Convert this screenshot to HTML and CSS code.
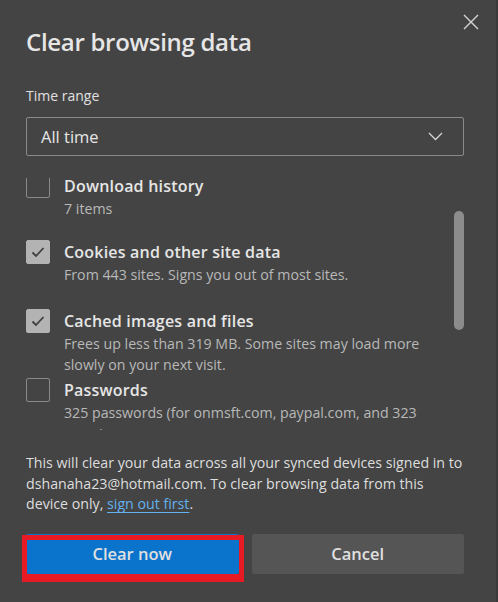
FILE: index.html
```html
<!DOCTYPE html>
<html>
<head>
<meta charset="utf-8">
<link rel="stylesheet" href="styles.css">
</head>
<body>
<div class="dialog">
  <button class="close" aria-label="Close">
    <svg width="16" height="16" viewBox="0 0 16 16"><path d="M1 1 L15 15 M15 1 L1 15" stroke="#d6d6d6" stroke-width="1.4" fill="none"/></svg>
  </button>
  <h1 class="title">Clear browsing data</h1>
  <div class="label">Time range</div>
  <div class="select">
    <span>All time</span>
    <svg width="15" height="9" viewBox="0 0 15 9"><path d="M1 1 L7.5 7.5 L14 1" stroke="#d6d6d6" stroke-width="1.3" fill="none"/></svg>
  </div>
  <div class="list-wrap">
    <div class="list">
      <div class="item">
        <span class="box"></span>
        <div class="text">
          <div class="name">Download history</div>
          <div class="desc">7 items</div>
        </div>
      </div>
      <div class="item">
        <span class="box checked"><svg width="16" height="16" viewBox="0 0 16 16"><path d="M2.5 8.5 L6 12 L13.5 4" stroke="#3f3f3f" stroke-width="1.8" fill="none"/></svg></span>
        <div class="text">
          <div class="name">Cookies and other site data</div>
          <div class="desc">From 443 sites. Signs you out of most sites.</div>
        </div>
      </div>
      <div class="item">
        <span class="box checked"><svg width="16" height="16" viewBox="0 0 16 16"><path d="M2.5 8.5 L6 12 L13.5 4" stroke="#3f3f3f" stroke-width="1.8" fill="none"/></svg></span>
        <div class="text">
          <div class="name">Cached images and files</div>
          <div class="desc">Frees up less than 319 MB. Some sites may load more slowly on your next visit.</div>
        </div>
      </div>
      <div class="item">
        <span class="box"></span>
        <div class="text">
          <div class="name">Passwords</div>
          <div class="desc">325 passwords (for onmsft.com, paypal.com, and 323 more)</div>
        </div>
      </div>
    </div>
    <div class="scrollbar"></div>
  </div>
  <p class="note">This will clear your data across all your synced devices signed in to dshanaha23@hotmail.com. To clear browsing data from this device only, <a href="#">sign out first</a>.</p>
  <div class="buttons">
    <button class="btn primary">Clear now</button>
    <button class="btn secondary">Cancel</button>
  </div>
</div>
</body>
</html>
```

FILE: styles.css
```css
html, body {
  margin: 0;
  padding: 0;
  background: #3a3a3a;
  height: 602px;
  overflow: hidden;
}
.dialog {
  position: relative;
  width: 496px;
  height: 602px;
  box-sizing: border-box;
  background: #444444;
  padding: 0 32px 0 26px;
  font-family: "Open Sans", "Noto Sans", sans-serif;
  color: #e2e2e2;
}
.close {
  position: absolute;
  top: 14px;
  left: 463px;
  width: 16px;
  height: 16px;
  padding: 0;
  border: 0;
  background: none;
  display: block;
}
.close svg { display: block; }
.title {
  margin: 0;
  padding-top: 26px;
  font-size: 24px;
  font-weight: 600;
  line-height: 32px;
  color: #e6e6e6;
  letter-spacing: -0.3px;
}
.label {
  margin-top: 28px;
  font-size: 14px;
  line-height: 20px;
  color: #e0e0e0;
}
.select {
  margin-top: 11px;
  height: 39px;
  box-sizing: border-box;
  border: 1px solid #8a8a8a;
  border-radius: 2px;
  display: flex;
  align-items: center;
  justify-content: space-between;
  padding: 0 20px 0 14px;
  font-size: 16.5px;
  color: #e6e6e6;
}
.select svg { display: block; }
.list-wrap {
  position: relative;
  height: 252px;
  margin-top: 22px;
  overflow: hidden;
}
.list {
  margin-top: -4px;
  padding-right: 26px;
}
.item {
  display: flex;
  gap: 14px;
  min-height: 66px;
  margin-bottom: 3px;
}
.item:first-child {
  margin-bottom: 0;
}
.box {
  flex: none;
  width: 24px;
  height: 24px;
  box-sizing: border-box;
  border: 1px solid #8a8a8a;
  border-radius: 2px;
  display: flex;
  align-items: center;
  justify-content: center;
}
.box.checked {
  background: #b3b3b3;
  border-color: #b3b3b3;
}
.box svg { display: block; }
.name {
  font-size: 16px;
  font-weight: 600;
  line-height: 24px;
  letter-spacing: 0.2px;
  color: #e6e6e6;
}
.desc {
  font-size: 14.2px;
  line-height: 21px;
  color: #b8b8b8;
}
.scrollbar {
  position: absolute;
  right: 0;
  top: 33px;
  width: 10px;
  height: 119px;
  border-radius: 5px;
  background: #8c8c8c;
}
.note {
  margin: 23px 0 0;
  font-size: 14.2px;
  line-height: 20.5px;
  color: #dedede;
}
.note a {
  color: #63b1ee;
  text-decoration: underline;
  text-decoration-thickness: 1px;
  text-underline-offset: 3px;
}
.buttons {
  display: flex;
  gap: 13px;
  margin-top: 19px;
}
.btn {
  flex: 1;
  height: 40px;
  border: 0;
  border-radius: 2px;
  font-family: inherit;
  font-size: 16.5px;
  font-weight: 600;
  color: #e0e0e0;
}
.primary {
  position: relative;
  background: #0a73cc;
}
.primary::after {
  content: "";
  position: absolute;
  left: -4px;
  right: -5px;
  top: 1px;
  bottom: -8px;
  border-style: solid;
  border-color: #e81b24;
  border-width: 5px 5px 8px 5px;
}
.secondary {
  background: #555555;
}
```
